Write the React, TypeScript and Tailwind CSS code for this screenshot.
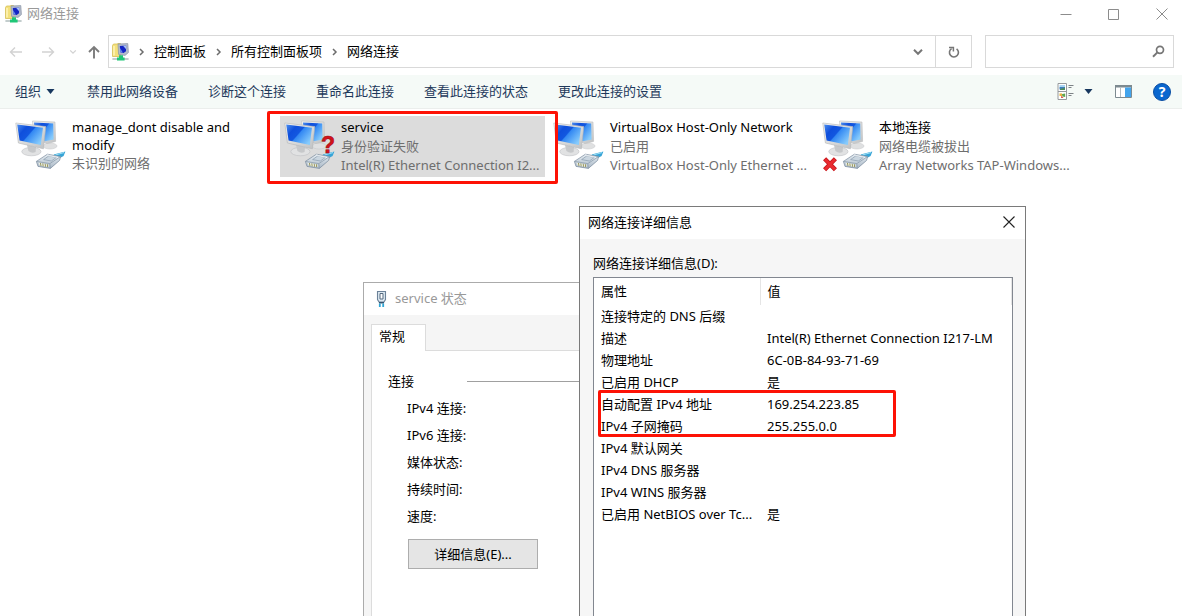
import type { ReactNode } from "react";

const NAV_ITEMS = ["控制面板", "所有控制面板项", "网络连接"];

const COMMANDS = [
  "禁用此网络设备",
  "诊断这个连接",
  "重命名此连接",
  "查看此连接的状态",
  "更改此连接的设置",
];

type Badge = "auth" | "unplugged";

type Connection = {
  name: string;
  status: string;
  device?: string;
  badge?: Badge;
  selected?: boolean;
};

const CONNECTIONS: Connection[] = [
  { name: "manage_dont disable and modify", status: "未识别的网络" },
  {
    name: "service",
    status: "身份验证失败",
    device: "Intel(R) Ethernet Connection I2...",
    badge: "auth",
    selected: true,
  },
  {
    name: "VirtualBox Host-Only Network",
    status: "已启用",
    device: "VirtualBox Host-Only Ethernet ...",
  },
  {
    name: "本地连接",
    status: "网络电缆被拔出",
    device: "Array Networks TAP-Windows...",
    badge: "unplugged",
  },
];

const STATUS_ROWS = ["IPv4 连接:", "IPv6 连接:", "媒体状态:", "持续时间:", "速度:"];

const DETAILS = [
  ["连接特定的 DNS 后缀", ""],
  ["描述", "Intel(R) Ethernet Connection I217-LM"],
  ["物理地址", "6C-0B-84-93-71-69"],
  ["已启用 DHCP", "是"],
  ["自动配置 IPv4 地址", "169.254.223.85"],
  ["IPv4 子网掩码", "255.255.0.0"],
  ["IPv4 默认网关", ""],
  ["IPv4 DNS 服务器", ""],
  ["IPv4 WINS 服务器", ""],
  ["已启用 NetBIOS over Tc...", "是"],
];

function FolderNetIcon() {
  return (
    <svg viewBox="0 0 17 18" className="h-[18px] w-[17px] shrink-0" aria-hidden="true">
      <path d="M0.5 2.5 L1.5 1 H5 L6 0.5 H8.5 V13.5 H0.5Z" fill="#f3e07c" stroke="#d6bf55" strokeWidth="0.8" />
      <path d="M2 3 V12.5" stroke="#fff6bd" strokeWidth="1.4" />
      <path d="M6 1 L15.8 0.6 L16.4 9.6 L13 12.4 L6.6 11.4Z" fill="#b4bccb" stroke="#8a93a5" strokeWidth="0.7" />
      <path d="M7.8 3 L14.2 2.4 L14 8.2 L11.6 10 L8.2 9.2Z" fill="#1526c4" />
      <path d="M11 2.8 L14.2 2.4 L14.1 6.2Z" fill="#a9c2f6" />
      <path d="M8 5 L10.8 9.4 L8.2 9Z" fill="#6b8eea" />
      <path d="M0.4 16 H16.6" stroke="#c3cdcd" strokeWidth="2" />
      <path d="M7 12.2 H11 V14.4 H12.6 V17.4 H5 V14.4 H7Z" fill="#1fc777" />
    </svg>
  );
}

function ConnectionIcon({ badge }: { badge?: Badge }) {
  return (
    <svg viewBox="0 0 60 57" className="h-[57px] w-[60px] shrink-0" aria-hidden="true">
      <defs>
        <linearGradient id="screen" x1="0" y1="0" x2="1" y2="0.7">
          <stop offset="0" stopColor="#4d8eee" />
          <stop offset="0.3" stopColor="#0f4fdc" />
          <stop offset="0.52" stopColor="#1257e0" />
          <stop offset="0.56" stopColor="#3388f3" />
          <stop offset="1" stopColor="#86cbfc" />
        </linearGradient>
        <linearGradient id="frame" x1="0" y1="0" x2="1" y2="1">
          <stop offset="0" stopColor="#f6f6f4" />
          <stop offset="1" stopColor="#bfc1c3" />
        </linearGradient>
        <linearGradient id="plug" x1="0" y1="0" x2="0" y2="1">
          <stop offset="0" stopColor="#e9f0f5" />
          <stop offset="1" stopColor="#a9b7c5" />
        </linearGradient>
      </defs>
      {/* rear monitor */}
      <ellipse cx="39" cy="28" rx="7" ry="3" fill="#dfe0e1" stroke="#c4c6c8" strokeWidth="0.5" />
      <path d="M21.5 3 L44 4 L44.6 23.4 L36 25.6 L23 20Z" fill="url(#frame)" stroke="#bcbec0" strokeWidth="0.6" />
      <path d="M23 4.6 L42.2 5.6 L42.6 21.4 L34 23.2 L24 18Z" fill="url(#screen)" />
      {/* front monitor */}
      <ellipse cx="20.4" cy="33.6" rx="9.6" ry="4.2" fill="#e1e2e3" stroke="#bec0c2" strokeWidth="0.6" />
      <path d="M16 27 L25 29 L24.6 34 Q21 36 17.4 33Z" fill="#c6c8ca" />
      <path d="M4.8 5 L34.8 8.6 L32.4 30.8 L7.4 25Z" fill="url(#frame)" stroke="#b3b5b7" strokeWidth="0.6" />
      <path d="M6.2 6.4 L32 9.8 L29.8 27 L8.6 22.6Z" fill="url(#screen)" />
      {/* cable plug */}
      <path d="M42.6 36.6 L54.4 33.6 L52.6 38 L48 40.4Z" fill="#37a4d6" />
      <path d="M44.4 37 L53 34.6" stroke="#9fe0f7" strokeWidth="1" />
      <path
        d="M25.4 43.4 L36.4 36.2 L49.6 38.6 L48.6 42.4 L39.4 50.4 L27 48.4Z"
        fill="url(#plug)"
        stroke="#788a9c"
        strokeWidth="0.7"
      />
      <path d="M25.4 43.4 L38.8 45.6 L49.6 38.6 M38.8 45.6 L39.4 50.4" fill="none" stroke="#8798a8" strokeWidth="0.7" />
      <path d="M27.6 44.8 L37.4 46.4 L37.6 49 L28.6 47.6Z" fill="#eef0e2" />
      <path d="M29.4 45 L30 48 M31.8 45.4 L32.2 48.4 M34.2 45.8 L34.6 48.8 M36.4 46.2 L36.6 49" stroke="#8f8d52" strokeWidth="0.9" />
      <path d="M32.6 41.6 L37.6 38 L45.4 39.4 L40.4 43Z" fill="#cad6e0" stroke="#7f92a5" strokeWidth="0.6" />
      <path d="M36.4 36.2 L38.4 37.8 L47 39.4" fill="none" stroke="#fff" strokeWidth="0.7" />
      {badge === "auth" && (
        <text
          x="41"
          y="35"
          fontSize="23"
          fontWeight="900"
          fill="#d3121b"
          stroke="#a00c12"
          strokeWidth="0.6"
          fontFamily="'Liberation Sans', sans-serif"
        >
          ?
        </text>
      )}
      {badge === "unplugged" && (
        <>
          <path d="M6.6 40.8 L17.4 51.8 M17.4 40.8 L6.6 51.8" stroke="#c4161b" strokeWidth="4.4" />
          <path d="M7 41.2 L17 51.4 M17 41.2 L7 51.4" stroke="#ea2b30" strokeWidth="2.8" />
        </>
      )}
    </svg>
  );
}

function Crumb({ label }: { label: string }) {
  return (
    <>
      <svg viewBox="0 0 25 10" className="h-[10px] w-[25px] shrink-0" aria-hidden="true">
        <path d="M11 2 L14 5 L11 8" fill="none" stroke="#6d6d6d" strokeWidth="1.5" />
      </svg>
      <a href="#" className="whitespace-nowrap">
        {label}
      </a>
    </>
  );
}

function IconButton({ label, className, children }: { label: string; className: string; children: ReactNode }) {
  return (
    <button aria-label={label} className={`flex shrink-0 items-center justify-center ${className}`}>
      {children}
    </button>
  );
}

function TitleBar() {
  return (
    <header className="flex h-[27px] items-center pl-[5px]">
      <FolderNetIcon />
      <h1 className="ml-[5px] flex-1 text-[#999999]">网络连接</h1>
      <div className="flex gap-2">
        <IconButton label="最小化" className="h-[26px] w-10">
          <svg viewBox="0 0 12 12" className="size-3">
            <path d="M0.5 6.5 H11.5" stroke="#8c8c8c" />
          </svg>
        </IconButton>
        <IconButton label="最大化" className="h-[26px] w-10">
          <svg viewBox="0 0 12 12" className="size-3">
            <path d="M0.5 1.5 H10.5 V11.5 H0.5Z" fill="none" stroke="#8c8c8c" />
          </svg>
        </IconButton>
        <IconButton label="关闭" className="h-[26px] w-10">
          <svg viewBox="0 0 12 12" className="size-3">
            <path d="M0.5 0.5 L11.5 11.5 M11.5 0.5 L0.5 11.5" stroke="#8c8c8c" />
          </svg>
        </IconButton>
      </div>
    </header>
  );
}

function AddressBar() {
  return (
    <div className="mt-2 flex h-[33px] items-center pr-2">
      <nav className="flex w-[108px] shrink-0 items-center pl-2">
        <IconButton label="后退" className="w-4">
          <svg viewBox="0 0 14 12" className="h-3 w-[14px]">
            <path d="M13 6 H1.5 M6 1.5 L1.5 6 L6 10.5" fill="none" stroke="#d2d2d2" strokeWidth="1.4" />
          </svg>
        </IconButton>
        <IconButton label="前进" className="ml-4 w-4">
          <svg viewBox="0 0 14 12" className="h-3 w-[14px]">
            <path d="M1 6 H12.5 M8 1.5 L12.5 6 L8 10.5" fill="none" stroke="#d2d2d2" strokeWidth="1.4" />
          </svg>
        </IconButton>
        <IconButton label="最近的位置" className="ml-3 w-[10px]">
          <svg viewBox="0 0 8 6" className="h-[6px] w-2">
            <path d="M1.2 1.4 L4 4.2 L6.8 1.4" fill="none" stroke="#d2d2d2" strokeWidth="1.3" />
          </svg>
        </IconButton>
        <IconButton label="上移" className="ml-2 w-4">
          <svg viewBox="0 0 14 14" className="size-[14px]">
            <path d="M7 13.5 V2 M2 7 L7 2 L12 7" fill="none" stroke="#7b7b7b" strokeWidth="1.9" />
          </svg>
        </IconButton>
      </nav>
      <div className="flex h-full min-w-0 flex-1 items-center border border-[#d9d9d9] pl-[3px]">
        <FolderNetIcon />
        <div className="flex min-w-0 flex-1 items-center overflow-hidden">
          {NAV_ITEMS.map((label) => (
            <Crumb key={label} label={label} />
          ))}
        </div>
        <IconButton label="以前的位置" className="h-full w-[34px]">
          <svg viewBox="0 0 10 8" className="h-2 w-[10px]">
            <path d="M1 1.8 L5 5.8 L9 1.8" fill="none" stroke="#767676" strokeWidth="2" />
          </svg>
        </IconButton>
        <IconButton label="刷新" className="h-full w-9 border-l border-[#d9d9d9]">
          <svg viewBox="0 0 12 12" className="size-3">
            <path d="M8.6 2.8 A4.5 4.5 0 1 1 3.6 2.6" fill="none" stroke="#767676" strokeWidth="1.6" />
            <path d="M1 1.4 H5.4 V5.6" fill="none" stroke="#767676" strokeWidth="1.5" />
          </svg>
        </IconButton>
      </div>
      <label className="ml-[13px] flex h-full w-[189px] shrink-0 items-center border border-[#d9d9d9] pr-2">
        <input type="search" aria-label="搜索" className="h-full min-w-0 flex-1 px-2 outline-none" />
        <svg viewBox="0 0 13 13" className="size-[13px]" aria-hidden="true">
          <circle cx="8" cy="4.8" r="3.5" fill="none" stroke="#767676" strokeWidth="1.7" />
          <path d="M5.4 7.4 L1 11.8" stroke="#767676" strokeWidth="2" />
        </svg>
      </label>
    </div>
  );
}

function CommandBar() {
  return (
    <div className="mt-[7px] flex h-[34px] items-center border-b border-[#ebeeec] bg-[#f5faf7] pr-[11px] pl-[15px] text-[#1e395b]">
      <button className="flex w-[72px] shrink-0 items-center gap-[5px]">
        组织
        <svg viewBox="0 0 9 5" className="h-[5px] w-[9px]" aria-hidden="true">
          <path d="M0.5 0 H8.5 L4.5 5Z" fill="#17375e" />
        </svg>
      </button>
      <div className="flex flex-1 gap-[30px]">
        {COMMANDS.map((label) => (
          <button key={label} className="whitespace-nowrap">
            {label}
          </button>
        ))}
      </div>
      <IconButton label="更改视图" className="w-[17px]">
        <svg viewBox="0 0 17 17" className="size-[17px]">
          <path d="M1 0.5 H9.5 V16.5 H1Z M1 8.5 H9.5" fill="#fff" stroke="#969a9c" />
          <path d="M2.5 2 H8 V4 H2.5Z" fill="#a9d4f2" />
          <path d="M2.5 4 H8 V6.4 H2.5Z" fill="#3b7fc0" />
          <path d="M3 6 L8 4.6 V7 H3Z" fill="#4f8a62" />
          <path d="M2.5 10.4 H5 V13 H2.5Z" fill="#e8b63e" />
          <path d="M5 11 L8.2 10.4 V14 L5.4 13.4Z" fill="#5fa64d" />
          <path d="M4.4 12.6 L6.6 15 H4Z" fill="#d8574a" />
          <path d="M11.5 2.5 H16.5 M11.5 4.5 H14.5 M11.5 10.5 H16.5 M11.5 12.5 H14.5" stroke="#7d8286" />
        </svg>
      </IconButton>
      <IconButton label="更多选项" className="ml-[9px] w-[10px]">
        <svg viewBox="0 0 9 5" className="h-[5px] w-[9px]">
          <path d="M0.5 0 H8.5 L4.5 5Z" fill="#17375e" />
        </svg>
      </IconButton>
      <IconButton label="预览窗格" className="ml-[22px] w-[17px]">
        <svg viewBox="0 0 17 13" className="h-[13px] w-[17px]">
          <path d="M0.5 0.5 H16.5 V12.5 H0.5Z" fill="#fff" stroke="#7d8a90" />
          <path d="M0 0 H17 V2.5 H0Z" fill="#7d8a90" />
          <path d="M5.5 2.5 V12" stroke="#b3bcc1" />
          <path d="M10 2.5 H16 V12 H10Z" fill="#43a4ec" />
        </svg>
      </IconButton>
      <IconButton
        label="帮助"
        className="ml-[21px] size-[18px] rounded-full border border-[#0a4fa3] bg-[#0a67cf] text-[14px] leading-none font-bold text-white"
      >
        ?
      </IconButton>
    </div>
  );
}

function ConnectionTile({ item }: { item: Connection }) {
  return (
    <li className={`relative flex h-[61px] w-[265px] py-[2px] ${item.selected ? "z-10 bg-[#dcdcdc]" : ""}`}>
      <ConnectionIcon badge={item.badge} />
      <div className={`min-w-0 flex-1 pl-px text-[#6e6e6e] ${item.device ? "leading-[19px]" : "leading-[18px]"}`}>
        <p className={item.device ? "whitespace-nowrap text-black" : "w-[180px] text-black"}>{item.name}</p>
        <p className="whitespace-nowrap">{item.status}</p>
        {item.device && <p className="whitespace-nowrap">{item.device}</p>}
      </div>
      {item.selected && (
        <span className="pointer-events-none absolute -inset-x-[13px] -top-[5px] -bottom-[7px] rounded-xs border-3 border-[#fd1205]" />
      )}
    </li>
  );
}

function StatusWindow() {
  return (
    <section
      aria-label="service 状态"
      className="absolute top-[282px] bottom-0 left-[363px] flex w-[480px] flex-col border border-b-0 border-[#ababab] bg-[#f5f5f5]"
    >
      <header className="flex h-8 shrink-0 items-center gap-2 bg-white pb-px pl-3 text-[#999999]">
        <svg viewBox="0 0 11 18" className="h-[18px] w-[11px]" aria-hidden="true">
          <path d="M1.5 1.5 H9.5 V9.5 L8 12 H3 L1.5 9.5Z" fill="#dce8f1" stroke="#6c8299" strokeWidth="1.1" />
          <path d="M4 3.5 H7 V9 H4Z" fill="#fff" stroke="#54687e" strokeWidth="1" />
          <path d="M3 12 H8 V13.5 H3Z" fill="#33526e" />
          <path d="M3.8 13.5 V17 M7.2 13.5 V17" stroke="#2fa6d6" strokeWidth="1.8" />
        </svg>
        <h2>service 状态</h2>
      </header>
      <div className="flex flex-1 flex-col pt-[9px] pl-[7px]">
        <div role="tablist" className="flex h-[27px] shrink-0">
          <button
            role="tab"
            aria-selected="true"
            className="flex w-[55px] justify-start border border-b-0 border-[#dcdcdc] bg-white pt-[2px] pl-[7px]"
          >
            常规
          </button>
          <span className="flex-1 border-b border-[#dcdcdc]" />
        </div>
        <div role="tabpanel" className="flex-1 border-l border-[#dcdcdc] bg-white pl-4">
          <div className="mt-[21px] flex items-center">
            <h3 className="w-[79px]">连接</h3>
            <hr className="flex-1 border-[#a0a0a0]" />
          </div>
          <ul className="mt-1 pl-[19px] leading-[27px]">
            {STATUS_ROWS.map((label) => (
              <li key={label}>{label}</li>
            ))}
          </ul>
          <button className="mt-[9px] ml-5 h-[30px] w-[130px] border border-[#adadad] bg-[#e5e5e5]">
            详细信息(E)...
          </button>
        </div>
      </div>
    </section>
  );
}

function DetailsWindow() {
  return (
    <section
      aria-label="网络连接详细信息"
      className="absolute top-[206px] bottom-0 left-[579px] flex w-[447px] flex-col border border-b-0 border-[#7a7a7a] bg-[#f6f6f6]"
    >
      <header className="flex h-8 shrink-0 items-center justify-between bg-white pr-[10px] pb-[2px] pl-2">
        <h2>网络连接详细信息</h2>
        <IconButton label="关闭" className="size-3">
          <svg viewBox="0 0 12 12" className="size-3">
            <path d="M0.5 0.5 L11.5 11.5 M11.5 0.5 L0.5 11.5" stroke="#222" strokeWidth="1.1" />
          </svg>
        </IconButton>
      </header>
      <div className="flex flex-1 flex-col pt-[15px] pr-3 pl-[13px]">
        <h3 id="details-label">网络连接详细信息(D):</h3>
        <div className="relative mt-1 flex-1 border border-b-0 border-[#828790] bg-white">
          <table aria-labelledby="details-label" className="w-full table-fixed text-left">
            <thead>
              <tr className="h-[27px]">
                <th className="w-[166px] border-r border-[#e5e5e5] pl-[7px] font-normal">属性</th>
                <th className="border-r border-[#e5e5e5] pl-[7px] font-normal">值</th>
              </tr>
            </thead>
            <tbody>
              {DETAILS.map(([name, value]) => (
                <tr key={name} className="h-[22px] whitespace-nowrap">
                  <td className="pl-[7px]">{name}</td>
                  <td className="pl-[7px]">{value}</td>
                </tr>
              ))}
            </tbody>
          </table>
          <span className="pointer-events-none absolute top-[112px] left-1 h-[47px] w-[298px] rounded-xs border-3 border-[#fd1205]" />
        </div>
      </div>
    </section>
  );
}

export default function App() {
  return (
    <div className="relative h-screen overflow-hidden bg-white font-['Noto_Sans','Noto_Sans_CJK_SC',sans-serif] text-[13px] leading-[19px] text-black">
      <TitleBar />
      <AddressBar />
      <CommandBar />
      <ul className="flex flex-wrap gap-1 pt-[7px] pl-[11px]">
        {CONNECTIONS.map((item) => (
          <ConnectionTile key={item.name} item={item} />
        ))}
      </ul>
      <StatusWindow />
      <DetailsWindow />
    </div>
  );
}
